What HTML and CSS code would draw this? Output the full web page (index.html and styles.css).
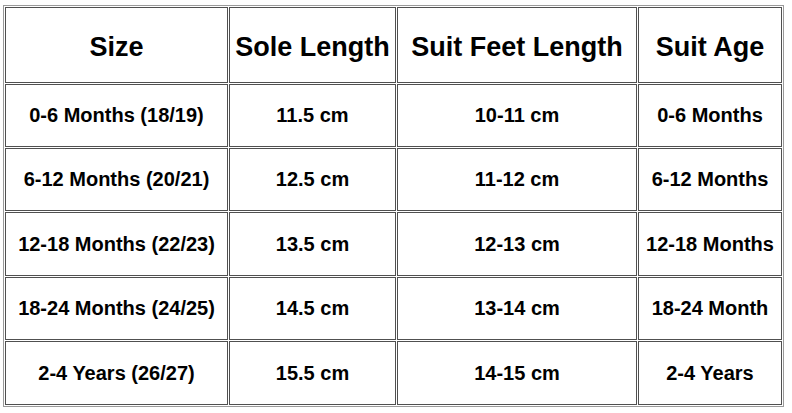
FILE: index.html
```html
<!DOCTYPE html>
<html>
<head>
<meta charset="utf-8">
<link rel="stylesheet" href="styles.css">
</head>
<body>
<table class="size-table">
  <colgroup>
    <col class="c1"><col class="c2"><col class="c3"><col class="c4">
  </colgroup>
  <thead>
    <tr class="head-row">
      <th>Size</th><th>Sole Length</th><th>Suit Feet Length</th><th>Suit Age</th>
    </tr>
  </thead>
  <tbody>
    <tr class="row r63"><td>0-6 Months (18/19)</td><td>11.5 cm</td><td>10-11 cm</td><td>0-6 Months</td></tr>
    <tr class="row r63"><td>6-12 Months (20/21)</td><td>12.5 cm</td><td>11-12 cm</td><td>6-12 Months</td></tr>
    <tr class="row r64"><td>12-18 Months (22/23)</td><td>13.5 cm</td><td>12-13 cm</td><td>12-18 Months</td></tr>
    <tr class="row r63"><td>18-24 Months (24/25)</td><td>14.5 cm</td><td>13-14 cm</td><td>18-24 Month</td></tr>
    <tr class="row r64"><td>2-4 Years (26/27)</td><td>15.5 cm</td><td>14-15 cm</td><td>2-4 Years</td></tr>
  </tbody>
</table>
</body>
</html>
```
FILE: styles.css
```css
html, body {
  margin: 0;
  padding: 0;
  background: #ffffff;
}

body {
  padding: 5px 0 0 3px;
  font-family: "Liberation Sans", Arial, sans-serif;
  color: #000;
}

.size-table {
  border-collapse: separate;
  border-spacing: 1px;
  border: 1px solid #9a9a9a;
  table-layout: fixed;
  width: 781px;
}

.c1 { width: 223px; }
.c2 { width: 167px; }
.c3 { width: 240px; }
.c4 { width: 144px; }

.size-table th,
.size-table td {
  border: 1px solid #505050;
  padding: 0;
  text-align: center;
  vertical-align: middle;
  box-sizing: border-box;
  white-space: nowrap;
}

.head-row th {
  height: 76px;
  font-size: 27px;
  font-weight: bold;
  padding-top: 4px;
}

.row td {
  font-size: 20px;
  font-weight: bold;
}

.r63 td { height: 63px; }
.r64 td { height: 64px; }
```
